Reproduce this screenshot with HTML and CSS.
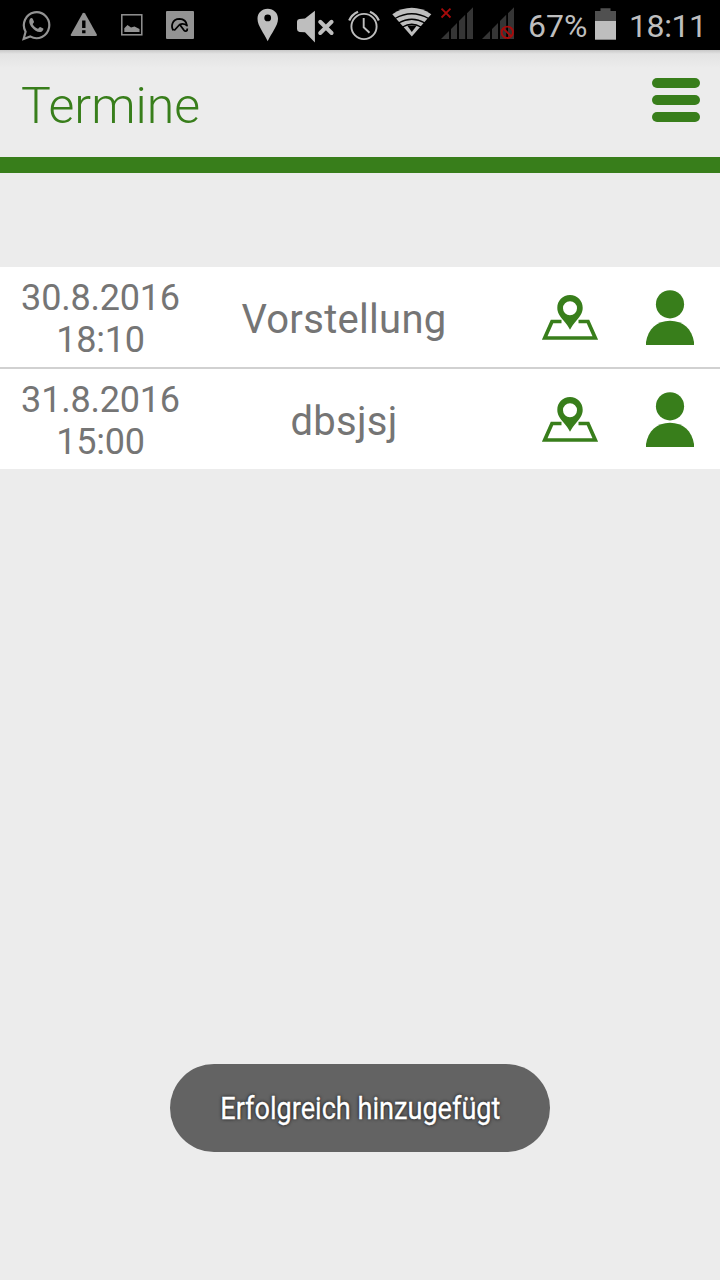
FILE: index.html
```html
<!DOCTYPE html>
<html lang="de">
<head>
<meta charset="utf-8">
<title>Termine</title>
<link rel="stylesheet" href="styles.css">
</head>
<body>
<svg class="defs" width="0" height="0" aria-hidden="true">
  <symbol id="map" viewBox="0 0 56 46">
    <path d="M19.500 26.500H10L2.700 43H53.300L46 26.500H36.500" fill="none" stroke="currentColor" stroke-width="3.700"/>
    <path fill="currentColor" fill-rule="evenodd" d="M28 0C20.700 0 15.300 5.800 15.300 12.800C15.300 18 18 21.500 21.500 25.500C24 28.500 26.500 31.500 28 34.800C29.500 31.500 32 28.500 34.500 25.500C38 21.500 40.700 18 40.700 12.800C40.700 5.800 35.300 0 28 0ZM28 6.200A7 7 0 1 1 28 20.200A7 7 0 0 1 28 6.200Z"/>
  </symbol>
  <symbol id="person" viewBox="0 0 48 55">
    <circle cx="24" cy="14.300" r="14.100" fill="currentColor"/>
    <path fill="currentColor" d="M0 55V52C2 39 11 30.700 24 30.700S46 39 48 52V55Z"/>
  </symbol>
</svg>
<div class="screen">
  <div class="status">
    <div class="notices">
      <svg width="30" height="50" viewBox="21 0 30 50"><path d="M23.600 39L25.600 31.700A12.700 13 0 1 1 30.200 36.400Z" fill="none" stroke="#939393" stroke-width="2.200"/><path fill="#939393" d="M30.300 18.500C31.200 17.500 32.200 17.800 32.700 18.700L34 21.800C34.200 22.600 32.700 23.700 32.700 24.200C33.800 26.500 35.700 28 37.900 28.800C38.600 28.700 39.500 26.900 40.200 27L43.300 28.500C43.800 29.200 42.800 31 41.500 31.700C38.500 33 34.500 30.500 32 27.500C29.500 24.700 28.300 21 30.300 18.500Z"/></svg>
      <svg width="28" height="50" viewBox="70 0 28 50"><path fill="#939393" d="M82.500 13.400Q83.800 12 85.100 13.400L97 34.700Q97 36 95.700 36H71.700Q70.500 36 70.700 34.700Z"/><path fill="#000" d="M82.100 20.500H85.500V28H82.100ZM82.100 30.300H85.500V33.300H82.100Z"/></svg>
      <svg width="22" height="50" viewBox="121 0 22 50"><rect x="121.800" y="14.800" width="20" height="20" fill="none" stroke="#939393" stroke-width="1.500"/><path fill="#939393" d="M124.300 32V28.200L127.500 25L131 27.500L134.500 26.500L139.500 29V32Z"/></svg>
      <svg width="28" height="50" viewBox="166 0 28 50"><rect x="166" y="11" width="28" height="28" rx="1" fill="#939393"/><g fill="none" stroke="#000" stroke-width="1.800" stroke-linejoin="round"><path d="M173.500 30.500C170.500 26.500 172 19 179.500 18.800C183.500 19 186.500 21.500 187 25.500C184.500 23.700 182 23.500 179.700 24.500L174.200 30.500"/><path d="M179.700 24.500L184 30.300C185.500 31.800 187.500 31 187.300 28.500"/></g></svg>
    </div>
    <div class="system">
      <svg width="22" height="50" viewBox="257 0 22 50"><path fill="#bebebe" fill-rule="evenodd" d="M267.700 8.700C261.700 8.700 257.500 13 257.500 18.800C257.500 26 264 33 267.700 41.300C271.400 33 278 26 278 18.800C278 13 273.700 8.700 267.700 8.700ZM267.700 14.500A3.400 3.400 0 1 1 267.700 21.300A3.400 3.400 0 0 1 267.700 14.500Z"/></svg>
      <svg class="mute" width="38" height="50" viewBox="297 0 38 50"><path fill="#bebebe" d="M299.500 19L305 18.500L314.900 10.700V42.400L305 32.300L299.500 32Q297 31.500 297 29V21.500Q297 19.300 299.500 19Z"/><path d="M320.200 21.800L331.600 33M331.600 21.800L320.200 33" stroke="#bebebe" stroke-width="4" stroke-linecap="round"/></svg>
      <svg class="alarm" width="32" height="50" viewBox="348 0 32 50"><g fill="none" stroke="#bebebe"><circle cx="364" cy="26.500" r="12.600" stroke-width="1.900"/><path d="M363.700 18V27.300L369.500 32.700" stroke-width="1.900"/><path d="M349.200 20.500Q351.500 14.800 358 11.800M378.800 20.500Q376.500 14.800 370 11.800" stroke-width="2.200"/></g></svg>
      <svg class="wifi" width="40" height="50" viewBox="392 0 40 50"><path fill="#bebebe" d="M392.300 14.200Q411.800 1.500 431.300 14.200L411.800 36.500Z"/><g fill="none" stroke="#000" stroke-width="1.300"><path d="M395 18.500Q411.800 9 428.600 18.500M398.500 23Q411.800 15.500 425 23M402.500 27Q411.800 21.500 421 27"/></g><path fill="#000" d="M407.200 25.500H416.800L411.800 32Z"/></svg>
      <svg class="signal" width="33" height="50" viewBox="440 0 33 50"><path fill="#353535" d="M441 39L449 31V39ZM451 39V29L457 23V39ZM459 39V21L465.200 14.800V39ZM467 39V13.300L473 7.300V39Z"/><path d="M441.500 8.700L450.500 17.500M450.500 8.700L441.500 17.500" stroke="#a80b0b" stroke-width="1.800"/></svg>
      <svg class="signal2" width="33" height="50" viewBox="482 0 33 50"><path fill="#353535" d="M482 39L490 31V39ZM492 39V29L498 23V39ZM500 39V21L506.200 14.800V39ZM508 39V13.300L514 7.300V39Z"/><g fill="none" stroke="#a80b0b" stroke-width="1.900"><circle cx="507.300" cy="32.300" r="5.700"/><path d="M503.200 28.300L511.300 36.400"/></g></svg>
      <span class="percent">67%</span>
      <svg class="battery" width="21" height="50" viewBox="595 0 21 50"><path fill="#505050" d="M595 11H600.500V8.300H610.500V11H616V21H595Z"/><path fill="#bebebe" d="M595 21H616V39.700H595Z"/></svg>
      <span class="clock">18:11</span>
    </div>
  </div>
  <header class="header">
    <h1 class="title">Termine</h1>
    <div class="menu"><i></i><i></i><i></i></div>
  </header>
  <main class="list">
    <div class="row">
      <div class="date">30.8.2016<br>18:10</div>
      <div class="name">Vorstellung</div>
      <svg class="map"><use href="#map"/></svg>
      <svg class="person"><use href="#person"/></svg>
    </div>
    <div class="row">
      <div class="date">31.8.2016<br>15:00</div>
      <div class="name">dbsjsj</div>
      <svg class="map"><use href="#map"/></svg>
      <svg class="person"><use href="#person"/></svg>
    </div>
  </main>
  <div class="toast"><span class="message">Erfolgreich hinzugefügt</span></div>
</div>
</body>
</html>
```

FILE: styles.css
```css
* { box-sizing: border-box; }
body {
  margin: 0;
  background: #ececec;
  font-family: Roboto, "Liberation Sans", sans-serif;
}
.defs { position: absolute; }
.screen {
  position: relative;
  width: 720px;
  height: 1280px;
  overflow: hidden;
}
.status {
  display: flex;
  height: 50px;
  padding-left: 21px;
  background: #000;
  color: #bebebe;
}
.status svg { display: block; flex: none; }
.notices {
  display: flex;
  width: 236px;
  gap: 19px;
}
.notices svg:nth-child(3) { margin-left: 4px; }
.notices svg:nth-child(4) { margin-left: 4px; }
.system { display: flex; }
.mute { margin-left: 18px; }
.alarm { margin-left: 13px; }
.wifi { margin-left: 12px; }
.signal { margin-left: 8px; }
.signal2 { margin-left: 9px; }
.percent, .clock {
  font-size: 32px;
  line-height: 52px;
  white-space: nowrap;
}
.percent { width: 80px; padding-left: 13px; }
.clock { padding-left: 13px; letter-spacing: -0.4px; }
.header {
  display: flex;
  justify-content: space-between;
  height: 123px;
  padding: 28px 20px 0 21px;
  border-bottom: 16px solid #387e1b;
  background: linear-gradient(#c8c8c8, #e3e3e3 4px, #ececec 18px);
}
.title {
  margin: 0;
  color: #387e1b;
  font-size: 50px;
  font-weight: 300;
  line-height: 56px;
}
.menu {
  display: flex;
  flex-direction: column;
  gap: 7px;
}
.menu i {
  width: 48px;
  height: 10px;
  border-radius: 5px;
  background: #387e1b;
}
.list { margin-top: 94px; }
.row {
  display: flex;
  align-items: center;
  height: 100px;
  background: #fff;
  color: #757575;
}
.row + .row {
  height: 102px;
  border-top: 2px solid #d1d1d1;
}
.date {
  width: 200px;
  padding: 4px 0 0 1px;
  font-size: 36px;
  line-height: 42px;
  letter-spacing: -0.2px;
  text-align: center;
}
.name {
  width: 288px;
  padding-top: 6px;
  font-size: 40px;
  line-height: 48px;
  letter-spacing: 0.3px;
  text-align: center;
}
.map {
  width: 56px;
  height: 46px;
  margin: 2px 0 0 54px;
  color: #387e1b;
}
.person {
  width: 48px;
  height: 55px;
  margin-left: 48px;
  color: #387e1b;
}
.toast {
  position: absolute;
  left: 170px;
  top: 1064px;
  display: flex;
  align-items: center;
  justify-content: center;
  width: 380px;
  height: 88px;
  border-radius: 44px;
  background: #636363;
}
.message {
  color: #fff;
  font-size: 32px;
  line-height: 40px;
  white-space: nowrap;
  -webkit-text-stroke: 0.3px #fff;
  text-shadow: 0 0 4px #000;
  transform: scaleX(0.847);
}
```
